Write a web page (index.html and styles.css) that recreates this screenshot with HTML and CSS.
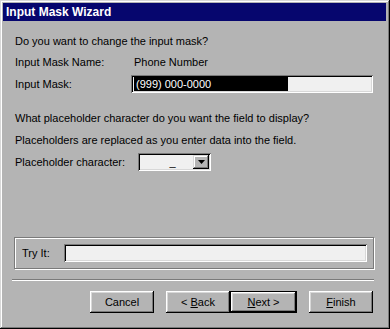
FILE: index.html
```html
<!DOCTYPE html>
<html>
<head>
<meta charset="utf-8">
<link rel="stylesheet" href="styles.css">
</head>
<body>
<div class="window">
  <div class="titlebar">Input Mask Wizard</div>
  <div class="content">
    <div class="line q1">Do you want to change the input mask?</div>
    <div class="row name-row">
      <div class="label">Input Mask Name:</div>
      <div class="value">Phone Number</div>
    </div>
    <div class="row mask-row">
      <div class="label">Input Mask:</div>
      <div class="field mask-field"><span class="sel">(999) 000-0000</span></div>
    </div>
    <div class="line q2">What placeholder character do you want the field to display?</div>
    <div class="line q3">Placeholders are replaced as you enter data into the field.</div>
    <div class="row ph-row">
      <div class="label ph-label">Placeholder character:</div>
      <div class="field combo">
        <span class="combo-text">_</span>
        <span class="combo-btn"><svg width="7" height="4" viewBox="0 0 7 4"><path d="M0 0h7L3.5 4z" fill="#000"/></svg></span>
      </div>
    </div>
    <div class="spacer"></div>
    <div class="group">
      <div class="try-label">Try It:</div>
      <div class="field try-field"></div>
    </div>
  </div>
  <div class="separator"></div>
  <div class="buttons">
    <button class="btn cancel">Cancel</button>
    <div class="pair">
      <button class="btn">&lt; <u>B</u>ack</button>
      <button class="btn default"><u>N</u>ext &gt;</button>
    </div>
    <button class="btn finish"><u>F</u>inish</button>
  </div>
</div>
</body>
</html>
```
FILE: styles.css
```css
html, body {
  margin: 0;
  padding: 0;
  background: #b4b4b4;
}
body {
  font-family: "Liberation Sans", Arial, sans-serif;
  font-size: 11px;
  color: #000;
}
.window {
  width: 390px;
  height: 329px;
  box-sizing: border-box;
  padding: 3px 4px 3px 3px;
  background: #b4b4b4;
  box-shadow: inset -1px -1px #000, inset 1px 1px #d8d8d8, inset -2px -2px #7a7a7a, inset 2px 2px #fff;
  display: flex;
  flex-direction: column;
}
.titlebar {
  height: 18px;
  background: #06066e;
  color: #fff;
  font-weight: bold;
  font-size: 12px;
  line-height: 18px;
  padding-left: 3px;
}
.content {
  padding-left: 12px;
  display: flex;
  flex-direction: column;
  flex: 1;
}
.line {
  height: 14px;
  line-height: 14px;
}
.q1 { margin-top: 13px; }
.row {
  display: flex;
  align-items: center;
}
.label {
  width: 116px;
  flex: none;
}
.name-row {
  margin-top: 7px;
  height: 14px;
  line-height: 14px;
}
.value { padding-left: 3px; }
.mask-row {
  margin-top: 6px;
  height: 18px;
}
.field {
  box-sizing: border-box;
  background: #f0f0f0;
  box-shadow: inset 1px 1px #7a7a7a, inset -1px -1px #fff, inset 2px 2px #000, inset -2px -2px #d8d8d8;
}
.mask-field {
  width: 242px;
  height: 18px;
  padding: 2px 0 2px 3px;
  display: flex;
}
.sel {
  background: #000;
  color: #fff;
  width: 154px;
  height: 14px;
  line-height: 14px;
  padding-left: 2px;
  box-sizing: border-box;
}
.q2 { margin-top: 18px; }
.q3 { margin-top: 8px; }
.ph-row {
  margin-top: 6px;
  height: 18px;
}
.ph-label { width: 123px; }
.combo {
  width: 73px;
  height: 18px;
  display: flex;
  align-items: center;
  padding: 2px;
}
.combo-text {
  flex: 1;
  text-align: center;
  padding-left: 12px;
  line-height: 14px;
}
.combo-btn {
  width: 16px;
  height: 14px;
  box-sizing: border-box;
  background: #b4b4b4;
  box-shadow: inset -1px -1px #000, inset 1px 1px #d8d8d8, inset -2px -2px #7a7a7a, inset 2px 2px #fff;
  display: flex;
  align-items: center;
  justify-content: center;
}
.spacer { flex: 1; }
.group {
  width: 360px;
  height: 32px;
  box-sizing: border-box;
  margin-left: -1px;
  margin-bottom: 10px;
  border: 1px solid #7a7a7a;
  box-shadow: 1px 1px #fff, inset 1px 1px #fff;
  display: flex;
  align-items: center;
  padding-left: 7px;
}
.try-label { width: 42px; }
.try-field {
  width: 303px;
  height: 18px;
}
.separator {
  margin-left: 9px;
  width: 362px;
  height: 1px;
  background: #7a7a7a;
  box-shadow: 0 1px #fff;
  margin-bottom: 11px;
}
.buttons {
  display: flex;
  padding-left: 87px;
  margin-bottom: 13px;
}
.btn {
  font-family: "Liberation Sans", Arial, sans-serif;
  font-size: 11px;
  color: #000;
  width: 64px;
  height: 22px;
  padding: 0;
  border: none;
  background: #b4b4b4;
  box-shadow: inset -1px -1px #000, inset 1px 1px #fff, inset -2px -2px #7a7a7a, inset 2px 2px #d8d8d8;
}
.pair {
  display: flex;
  margin-left: 12px;
}
.btn.default {
  width: 67px;
  border: 1px solid #000;
}
.finish { margin-left: 12px; }
```
